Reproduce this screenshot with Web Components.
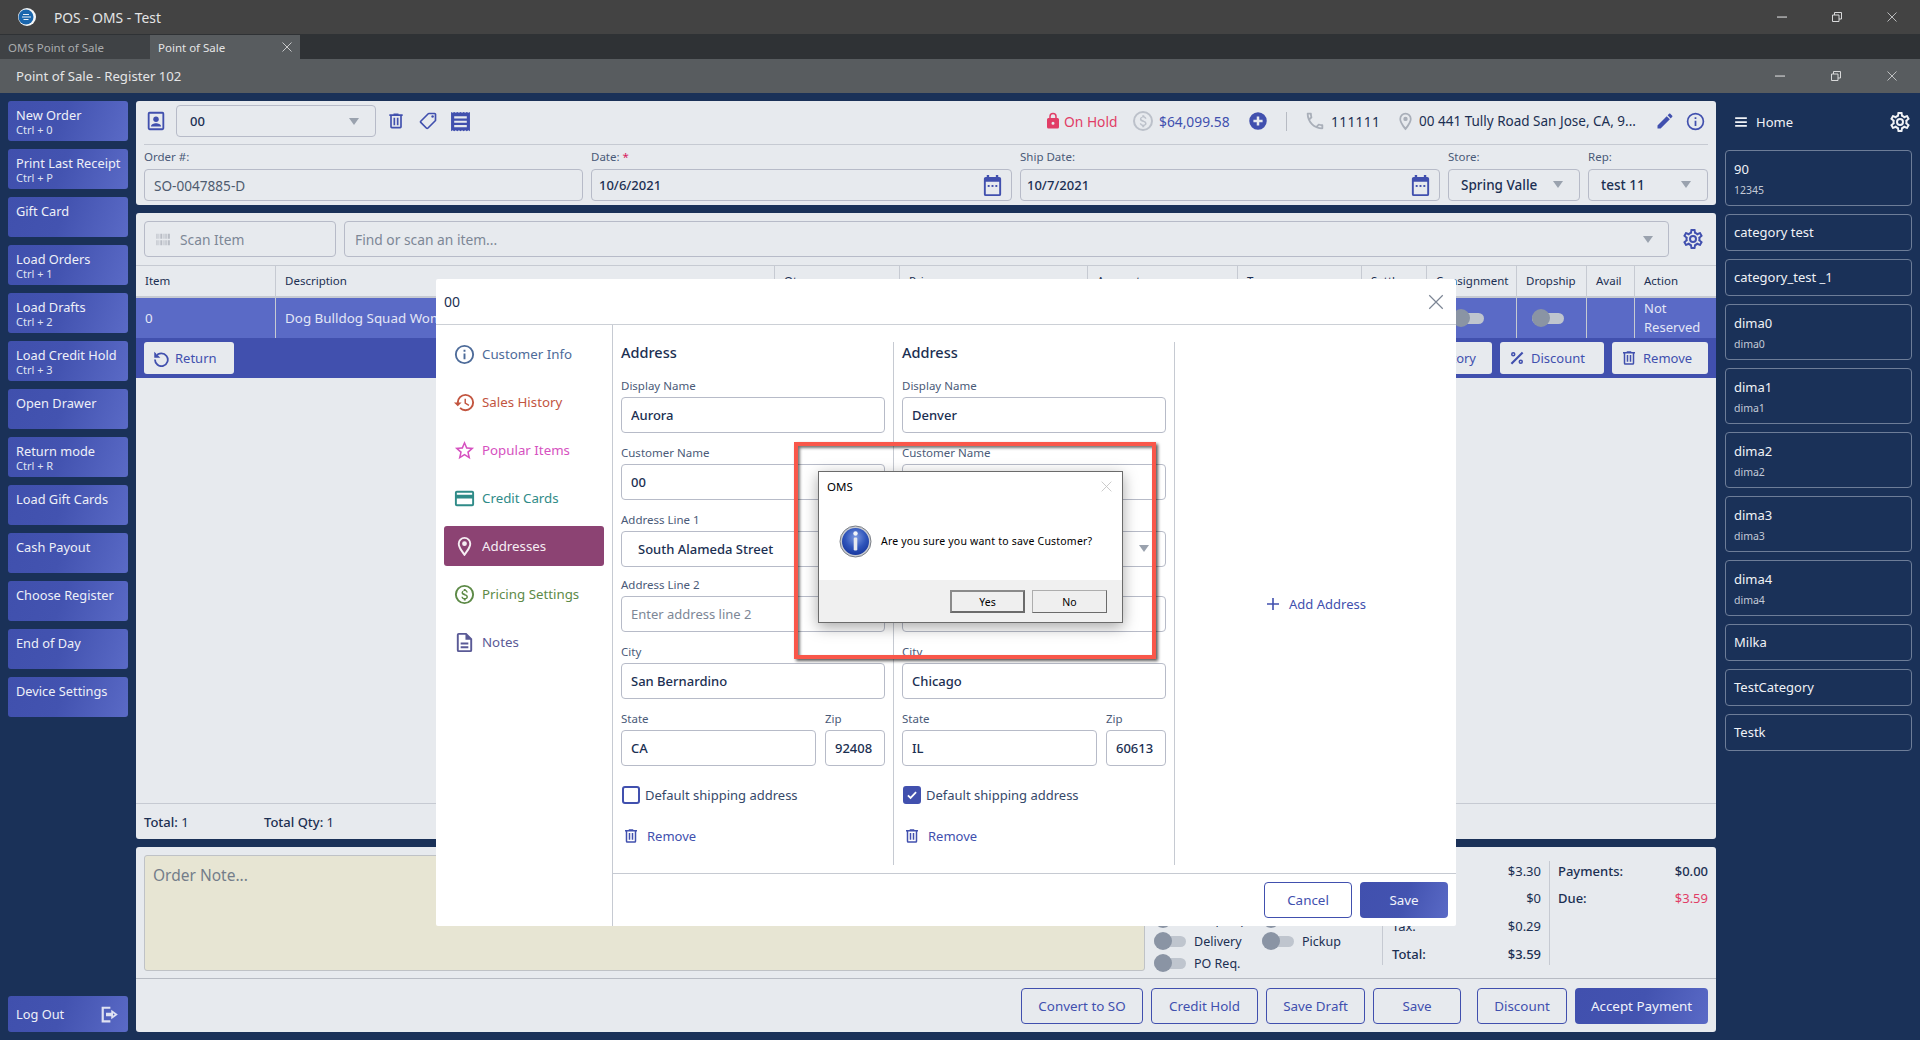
<!DOCTYPE html>
<html lang="en">
<head>
<meta charset="utf-8">
<title>POS - OMS - Test</title>
<style>
  html, body { margin: 0; height: 100%; overflow: hidden; background: #1a3158; }
</style>
</head>
<body>
<pos-app></pos-app>
<script>
// icon paths, 24x24 box
const ICONS = {
  trash: '<path d="M9 3v1H4v2h1v13a2 2 0 0 0 2 2h10a2 2 0 0 0 2-2V6h1V4h-5V3H9m-2 3h10v13H7V6m2 2v9h2V8H9m4 0v9h2V8h-2Z"/>',
  contact: '<path fill-rule="evenodd" d="M5 2h14a2 2 0 0 1 2 2v16a2 2 0 0 1-2 2H5a2 2 0 0 1-2-2V4a2 2 0 0 1 2-2m0 2v16h14V4H5Z"/><circle cx="12" cy="10" r="3"/><path d="M6.500 18c0-2.400 3.200-3.600 5.500-3.600s5.500 1.200 5.500 3.600Z"/>',
  tag: '<g transform="translate(24 0) scale(-1 1)"><path d="M21.410 11.580l-9-9C12.050 2.220 11.550 2 11 2H4c-1.100 0-2 .9-2 2v7c0 .55.22 1.050.59 1.420l9 9c.36.36.86.58 1.410.58.55 0 1.050-.22 1.410-.59l7-7c.37-.36.59-.86.59-1.410 0-.55-.23-1.060-.59-1.420M13 20l-9-9V4h7v-.01l9 9-7 7.010Z"/><circle cx="6.500" cy="6.500" r="1.500"/></g>',
  receipt: '<path transform="translate(12 0) scale(1.200 1) translate(-12 0)" fill-rule="evenodd" d="M3 1l1.500 1L6 1l1.500 1L9 1l1.500 1L12 1l1.500 1L15 1l1.500 1L18 1l1.500 1L21 1v22l-1.500-1-1.500 1-1.500-1-1.500 1-1.500-1-1.500 1-1.500-1L9 23l-1.500-1L6 23l-1.500-1L3 23V1m3 5v2.500h12V6H6m0 5v2.500h12V11H6m0 5v2.500h12V16H6Z"/>',
  calendar: '<path fill-rule="evenodd" d="M6 1h2.500v2h7V1H18v2h1a2 2 0 0 1 2 2v16a2 2 0 0 1-2 2H5a2 2 0 0 1-2-2V5a2 2 0 0 1 2-2h1V1M5 8v13h14V8H5Z"/><rect x="7" y="11.500" width="2" height="2"/><rect x="11" y="11.500" width="2" height="2"/><rect x="15" y="11.500" width="2" height="2"/>',
  lock: '<path d="M12 17a2 2 0 0 0 2-2 2 2 0 0 0-2-2 2 2 0 0 0-2 2 2 2 0 0 0 2 2m6-9a2 2 0 0 1 2 2v10a2 2 0 0 1-2 2H6a2 2 0 0 1-2-2V10a2 2 0 0 1 2-2h1V6a5 5 0 0 1 5-5 5 5 0 0 1 5 5v2h1m-6-5a3 3 0 0 0-3 3v2h6V6a3 3 0 0 0-3-3Z"/>',
  dollar: '<path fill-rule="evenodd" d="M12 2a10 10 0 1 1 0 20 10 10 0 0 1 0-20m0 2a8 8 0 1 0 0 16 8 8 0 0 0 0-16Z"/><path d="M12.700 11.200c-1.800-.45-2.300-.85-2.300-1.550 0-.75.7-1.250 1.800-1.250 1.200 0 1.650.58 1.700 1.400h1.500c-.05-1.150-.75-2.200-2.150-2.550V6.300h-2v1.450c-1.300.28-2.350 1.120-2.350 2.420 0 1.540 1.280 2.300 3.150 2.750 1.670.4 2 .99 2 1.610 0 .46-.33 1.200-1.800 1.200-1.380 0-1.920-.62-2-1.400H8.800c.08 1.460 1.170 2.280 2.450 2.550v1.450h2v-1.430c1.300-.25 2.350-1 2.350-2.370 0-1.900-1.630-2.540-2.900-2.830Z"/>',
  plus: '<path fill-rule="evenodd" d="M12 1.500a10.500 10.500 0 1 1 0 21 10.500 10.500 0 0 1 0-21M10.500 6.500v4h-4v3h4v4h3v-4h4v-3h-4v-4h-3Z"/>',
  phone: '<path d="M20 15.500c-1.200 0-2.500-.2-3.600-.6h-.3c-.3 0-.5.1-.7.3l-2.200 2.200c-2.800-1.500-5.200-3.800-6.600-6.600l2.200-2.200c.3-.3.4-.7.2-1-.3-1.100-.5-2.400-.5-3.600 0-.5-.5-1-1-1H4c-.5 0-1 .5-1 1 0 9.400 7.600 17 17 17 .5 0 1-.5 1-1v-3.500c0-.5-.5-1-1-1M5 5h1.500c.1.9.3 1.800.5 2.600L5.800 8.800C5.400 7.600 5.100 6.300 5 5m14 14c-1.300-.1-2.600-.4-3.800-.8l1.200-1.200c.8.2 1.700.4 2.600.4V19Z"/>',
  pin: '<path d="M12 6.500A2.500 2.500 0 0 1 14.500 9a2.500 2.500 0 0 1-2.500 2.500A2.500 2.500 0 0 1 9.500 9 2.500 2.500 0 0 1 12 6.500M12 2a7 7 0 0 1 7 7c0 5.250-7 13-7 13S5 14.250 5 9a7 7 0 0 1 7-7m0 2a5 5 0 0 0-5 5c0 1 0 3 5 9.710C17 12 17 10 17 9a5 5 0 0 0-5-5Z"/>',
  pencil: '<path d="M20.710 7.040c.39-.39.39-1.040 0-1.410l-2.340-2.340c-.37-.39-1.020-.39-1.410 0l-1.840 1.830 3.750 3.750M3 17.250V21h3.750L17.810 9.930l-3.750-3.750L3 17.250Z"/>',
  info: '<path d="M11 9h2V7h-2m1 13c-4.410 0-8-3.590-8-8s3.590-8 8-8 8 3.590 8 8-3.590 8-8 8m0-18A10 10 0 0 0 2 12a10 10 0 0 0 10 10 10 10 0 0 0 10-10A10 10 0 0 0 12 2m-1 15h2v-6h-2v6Z"/>',
  gear: '<path d="M12 8a4 4 0 0 1 4 4 4 4 0 0 1-4 4 4 4 0 0 1-4-4 4 4 0 0 1 4-4m0 2a2 2 0 0 0-2 2 2 2 0 0 0 2 2 2 2 0 0 0 2-2 2 2 0 0 0-2-2m-2 12c-.25 0-.46-.18-.5-.42l-.37-2.650c-.63-.25-1.170-.59-1.690-.99l-2.490 1.010c-.22.08-.49 0-.61-.22l-2-3.460a.493.493 0 0 1 .12-.64l2.110-1.660L4.500 12l.07-1-2.110-1.630a.493.493 0 0 1-.12-.64l2-3.460c.12-.22.39-.31.61-.22l2.490 1c.52-.39 1.060-.73 1.690-.98l.37-2.650c.04-.24.25-.42.5-.42h4c.25 0 .46.18.5.42l.37 2.650c.63.25 1.170.59 1.690.98l2.490-1c.22-.09.49 0 .61.22l2 3.460c.13.22.07.49-.12.64L19.430 11l.07 1-.07 1 2.110 1.630c.19.15.25.42.12.64l-2 3.460c-.12.22-.39.31-.61.22l-2.490-1c-.52.39-1.060.73-1.690.98l-.37 2.650c-.04.24-.25.42-.5.42h-4m1.250-18-.37 2.610c-1.200.25-2.260.89-3.030 1.780L5.440 7.350l-.75 1.300L6.800 10.200a5.550 5.550 0 0 0 0 3.600l-2.120 1.560.75 1.300 2.430-1.040c.77.88 1.820 1.520 3.010 1.760l.37 2.620h1.520l.37-2.610c1.190-.25 2.240-.89 3.010-1.770l2.430 1.040.75-1.300-2.120-1.550c.4-1.170.4-2.440 0-3.610l2.110-1.550-.75-1.300-2.410 1.040a5.420 5.420 0 0 0-3.030-1.770L12.750 4h-1.500Z"/>',
  history: '<path d="M13.500 8H12v5l4.280 2.540.72-1.210-3.500-2.080V8M13 3a9 9 0 0 0-9 9H1l3.960 4.030L9 12H6a7 7 0 0 1 7-7 7 7 0 0 1 7 7 7 7 0 0 1-7 7c-1.930 0-3.680-.79-4.940-2.060l-1.420 1.420A8.896 8.896 0 0 0 13 21a9 9 0 0 0 9-9 9 9 0 0 0-9-9Z"/>',
  star: '<path d="M12 15.390l-3.760 2.270.99-4.280-3.320-2.880 4.380-.37L12 6.090l1.710 4.040 4.380.37-3.320 2.880.99 4.280M22 9.240l-7.190-.61L12 2 9.190 8.630 2 9.240l5.450 4.730L5.820 21 12 17.270 18.180 21l-1.640-7.030L22 9.240Z"/>',
  card: '<path d="M20 4H4c-1.110 0-2 .89-2 2v12a2 2 0 0 0 2 2h16a2 2 0 0 0 2-2V6c0-1.110-.89-2-2-2m0 14H4v-6h16v6m0-10H4V6h16v2Z"/>',
  doc: '<path d="M6 2a2 2 0 0 0-2 2v16a2 2 0 0 0 2 2h12a2 2 0 0 0 2-2V8l-6-6H6m0 2h7v5h5v11H6V4m2 8v2h8v-2H8m0 4v2h8v-2H8Z"/>',
  percent: '<path d="M18.500 3.500l2 2-15 15-2-2 15-15M7 4a3 3 0 0 1 3 3 3 3 0 0 1-3 3 3 3 0 0 1-3-3 3 3 0 0 1 3-3m10 10a3 3 0 0 1 3 3 3 3 0 0 1-3 3 3 3 0 0 1-3-3 3 3 0 0 1 3-3M7 6a1 1 0 0 0-1 1 1 1 0 0 0 1 1 1 1 0 0 0 1-1 1 1 0 0 0-1-1m10 10a1 1 0 0 0-1 1 1 1 0 0 0 1 1 1 1 0 0 0 1-1 1 1 0 0 0-1-1Z"/>',
  restore: '<path fill="none" stroke="currentColor" stroke-width="2.400" d="M5.500 9.500A8.500 8.500 0 1 1 4 14"/><path d="M3 3.500v8h8L8.500 9 5.800 9 5.500 6Z"/>',
  logout: '<path d="M3 3h10v2.500H5.500v13H13V21H3V3m11 3.500 7.500 5.500-7.500 5.500V14H8v-4h6V6.500m2 4v1.500h-6v0h6v1.500L18 12Z"/>',
  menu: '<path d="M2 4h20v3H2V4m0 6.500h20v3H2v-3M2 17h20v3H2v-3Z"/>',
  close: '<path fill="none" stroke="currentColor" stroke-width="1.600" d="M3 3l18 18M21 3 3 21"/>',
  minimize: '<path d="M2 11h20v2.200H2Z"/>',
  maximize: '<path fill="none" stroke="currentColor" stroke-width="2" d="M3 8h13v13H3V8M7 8V3h14v13h-5"/>',
  barcode: '<path d="M2 4h1.500v7H2V4m3 0h1v7H5V4m2.500 0H10v7H7.500V4M11 4h1v7h-1V4m2.500 0H15v7h-1.500V4m2.500 0h1v7h-1V4m2 0h3v7h-3V4M2 13h1.500v7H2v-7m3 0h1v7H5v-7m2.500 0H10v7H7.500v-7M11 13h1v7h-1v-7m2.500 0H15v7h-1.500v-7m2.500 0h1v7h-1v-7m2 0h3v7h-3v-7Z"/>',
  check: '<path fill="none" stroke="currentColor" stroke-width="3" d="M5 12.500l4.500 4.500L19 7"/>',
  add: '<path d="M10.800 3h2.400v7.800H21v2.400h-7.800V21h-2.400v-7.800H3v-2.400h7.800V3Z"/>'
};

class UiIcon extends HTMLElement {
  connectedCallback() {
    const size = this.getAttribute('size') || 20;
    this.attachShadow({ mode: 'open' }).innerHTML = `
      <style>:host { display: inline-flex; flex: none; width: ${size}px; height: ${size}px; } svg { width: 100%; height: 100%; fill: currentColor; display: block; }</style>
      <svg viewBox="0 0 24 24" aria-hidden="true">${ICONS[this.getAttribute('name')] || ''}</svg>`;
  }
}
customElements.define('ui-icon', UiIcon);

// the dark window strips on top
class WinBar extends HTMLElement {
  connectedCallback() {
    const inner = this.hasAttribute('inner');
    this.attachShadow({ mode: 'open' }).innerHTML = `
      <style>
        :host { display: flex; align-items: center; height: 34px; background: ${inner ? '#585c5f' : '#434343'}; color: #e4e5e6; font-size: ${inner ? 13.2 : 13.8}px; padding-left: ${inner ? 16 : 18}px; }
        .controls { margin-left: auto; display: flex; align-items: center; color: #d8d9da; }
        .controls ui-icon { margin-right: ${inner ? 44 : 43}px; }
        .controls ui-icon:last-child { margin-right: 22px; }
        ::slotted(svg) { margin-right: 18px; }
      </style>
      <slot name="logo"></slot><span>${this.getAttribute('title-text')}</span>
      <div class="controls">
        <ui-icon name="minimize" size="12"></ui-icon>
        <ui-icon name="maximize" size="12"></ui-icon>
        <ui-icon name="close" size="12"></ui-icon>
      </div>`;
  }
}
customElements.define('win-bar', WinBar);

const tabTpl = document.createElement('template');
tabTpl.innerHTML = `
  <style>
    :host { display: flex; height: 25px; background: #2f3235; font-size: 11.500px; }
    .tab { box-sizing: border-box; width: 150px; height: 24px; margin-top: 1px; display: flex; align-items: center; padding-left: 8px; background: #3f4245; color: #a9abad; }
    .on { background: #585c5f; color: #e4e5e6; justify-content: space-between; padding-right: 7px; }
  </style>
  <div class="tab">OMS Point of Sale</div>
  <div class="tab on">Point of Sale<ui-icon name="close" size="12"></ui-icon></div>`;
class TabStrip extends HTMLElement {
  constructor() { super(); this.attachShadow({ mode: 'open' }).appendChild(tabTpl.content.cloneNode(true)); }
}
customElements.define('tab-strip', TabStrip);

const sideTpl = document.createElement('template');
sideTpl.innerHTML = `
  <style>
    :host { box-sizing: border-box; display: block; width: 120px; height: 40px; padding: 6px 8px 0; border-radius: 3px; background: linear-gradient(110deg, #4050ad 0%, #4353b0 45%, #5a6ac6 100%); color: #eef0f8; font-size: 12.800px; line-height: 16px; white-space: nowrap; }
    div { font-size: 11px; line-height: 13px; color: #dfe2f2; }
  </style>
  <slot></slot><div><slot name="key"></slot></div>`;
class SideBtn extends HTMLElement {
  constructor() { super(); this.attachShadow({ mode: 'open' }).appendChild(sideTpl.content.cloneNode(true)); }
}
customElements.define('side-btn', SideBtn);

const fieldTpl = document.createElement('template');
fieldTpl.innerHTML = `
  <style>
    :host { display: block; min-width: 0; }
    label { display: block; height: var(--label-h, 19px); line-height: var(--label-h, 19px); margin-bottom: var(--label-gap, 2px); font-size: 11.500px; color: #4a5a78; white-space: nowrap; }
    label b { color: #d81b60; font-weight: 400; }
    .box { box-sizing: border-box; height: var(--input-h, 36px); display: flex; align-items: center; padding: 0 8px 0 var(--pad-left, 9px); background: var(--input-bg, #fff); border: 1px solid #b7bbc8; border-radius: 4px; font-size: var(--val-size, 13px); font-weight: 500; color: #1b2f52; white-space: nowrap; overflow: hidden; }
    .ph { color: #7d8796; font-weight: 400; }
    .grey { color: #4f5c70; font-weight: 400; }
    span { flex: 1; min-width: 0; overflow: hidden; }
    .caret { flex: none; width: 0; height: 0; margin: 0 8px 2px 6px; border: 5px solid transparent; border-top: 7px solid #9aa2ae; border-bottom: 0; }
    ui-icon { color: #4150ae; margin-right: -1px; }
  </style>
  <label></label>
  <div class="box"><span></span></div>`;
class FormField extends HTMLElement {
  connectedCallback() {
    const root = this.attachShadow({ mode: 'open' });
    root.appendChild(fieldTpl.content.cloneNode(true));
    const label = root.querySelector('label');
    label.textContent = this.getAttribute('label');
    if (this.hasAttribute('required')) label.insertAdjacentHTML('beforeend', ' <b>*</b>');
    const text = root.querySelector('span');
    if (this.hasAttribute('placeholder')) {
      text.textContent = this.getAttribute('placeholder');
      text.className = 'ph';
    } else {
      text.textContent = this.getAttribute('value') || '';
    }
    if (this.hasAttribute('muted')) text.className = 'grey';
    const box = root.querySelector('.box');
    if (this.hasAttribute('caret')) box.insertAdjacentHTML('beforeend', '<i class="caret"></i>');
    if (this.hasAttribute('date')) box.insertAdjacentHTML('beforeend', '<ui-icon name="calendar" size="23"></ui-icon>');
  }
}
customElements.define('form-field', FormField);

const btnTpl = document.createElement('template');
btnTpl.innerHTML = `
  <style>
    :host { box-sizing: border-box; display: inline-flex; align-items: center; justify-content: center; height: 36px; border: 1px solid #4150ae; border-radius: 4px; color: #4150ae; font-size: 13.400px; white-space: nowrap; }
    :host([primary]) { border: 0; color: #f1f3fb; background: linear-gradient(110deg, #4150ae 0%, #4353b0 50%, #5a6ac6 100%); }
    :host([plain]) { height: 32px; border: 0; background: #e7eaee; gap: 5px; border-radius: 3px; justify-content: flex-start; padding-left: 8px; font-size: 13px; }
  </style>
  <slot></slot>`;
class PosBtn extends HTMLElement {
  constructor() { super(); this.attachShadow({ mode: 'open' }).appendChild(btnTpl.content.cloneNode(true)); }
}
customElements.define('pos-btn', PosBtn);

const toggleTpl = document.createElement('template');
toggleTpl.innerHTML = `
  <style>
    :host { display: flex; align-items: center; gap: 8px; height: 22px; font-size: 12.500px; color: #1b2f52; white-space: nowrap; }
    .sw { position: relative; flex: none; width: 32px; height: 11px; border-radius: 6px; background: #bfc5ce; }
    .sw::before { content: ""; position: absolute; left: 0; top: -4px; width: 18px; height: 18px; border-radius: 50%; background: #8a94a4; }
  </style>
  <div class="sw"></div><slot></slot>`;
class ToggleSw extends HTMLElement {
  constructor() { super(); this.attachShadow({ mode: 'open' }).appendChild(toggleTpl.content.cloneNode(true)); }
}
customElements.define('toggle-sw', ToggleSw);

const catTpl = document.createElement('template');
catTpl.innerHTML = `
  <style>
    :host { box-sizing: border-box; display: block; width: 187px; min-height: 37px; padding: 0 8px; border: 1px solid #6d7d98; border-radius: 4px; color: #f0f2f6; font-size: 13px; line-height: 35px; }
    :host([sub]) { height: 56px; padding-top: 9px; line-height: 19px; }
    div { margin-top: 3px; font-size: 10.500px; line-height: 16px; color: #c3cad6; }
  </style>
  <slot></slot>`;
class CatCard extends HTMLElement {
  connectedCallback() {
    const root = this.attachShadow({ mode: 'open' });
    root.appendChild(catTpl.content.cloneNode(true));
    if (this.hasAttribute('sub')) root.appendChild(Object.assign(document.createElement('div'), { textContent: this.getAttribute('sub') }));
  }
}
customElements.define('cat-card', CatCard);

const addrTpl = document.createElement('template');
addrTpl.innerHTML = `
  <style>
    :host { box-sizing: border-box; display: block; width: 281px; padding: 0 8px; border-right: 1px solid #c6cad2; color: #1b2f52; }
    h3 { margin: 0 0 13px; height: 21px; line-height: 21px; font-size: 14.500px; font-weight: 500; }
    form-field { margin-top: 10px; }
    h3 + form-field { margin-top: 0; }
    .tight { margin-top: 8px; }
    .split { display: grid; grid-template-columns: 195px 60px; column-gap: 9px; }
    .check { display: flex; align-items: center; gap: 5px; margin: 20px 0 0 1px; height: 18px; font-size: 13px; color: #36496a; }
    .check i { box-sizing: border-box; width: 18px; height: 18px; border: 2px solid #4150ae; border-radius: 3px; color: #fff; }
    .check i.on { background: #4150ae; }
    .remove { display: flex; align-items: center; gap: 7px; margin: 22px 0 0 1px; height: 20px; font-size: 13px; color: #4150ae; }
  </style>
  <h3>Address</h3>
  <form-field class="n" label="Display Name"></form-field>
  <form-field class="c" label="Customer Name"></form-field>
  <form-field class="a1" label="Address Line 1" caret></form-field>
  <form-field class="a2 tight" label="Address Line 2"></form-field>
  <form-field class="ci" label="City"></form-field>
  <div class="split">
    <form-field class="st" label="State"></form-field>
    <form-field class="zi" label="Zip"></form-field>
  </div>
  <div class="check"><i></i>Default shipping address</div>
  <div class="remove"><ui-icon name="trash" size="18"></ui-icon>Remove</div>`;
class AddressCol extends HTMLElement {
  connectedCallback() {
    // set the field values on the clone, before the fields get connected
    const frag = addrTpl.content.cloneNode(true);
    const map = { n: 'name', c: 'customer', a1: 'line1', ci: 'city', st: 'state', zi: 'zip' };
    for (const k in map) {
      if (this.hasAttribute(map[k])) frag.querySelector('.' + k).setAttribute('value', this.getAttribute(map[k]));
    }
    if (this.hasAttribute('line1')) frag.querySelector('.a1').setAttribute('style', '--pad-left:16px');
    if (this.hasAttribute('line2-empty')) frag.querySelector('.a2').setAttribute('placeholder', 'Enter address line 2');
    if (this.hasAttribute('default')) {
      const box = frag.querySelector('.check i');
      box.className = 'on';
      box.innerHTML = '<ui-icon name="check" size="14"></ui-icon>';
    }
    this.attachShadow({ mode: 'open' }).appendChild(frag);
  }
}
customElements.define('address-col', AddressCol);

const modalTpl = document.createElement('template');
modalTpl.innerHTML = `
  <style>
    :host { position: absolute; left: 436px; top: 279px; width: 1020px; height: 647px; display: flex; flex-direction: column; background: #fff; border-radius: 2px; color: #1b2f52; }
    header { box-sizing: border-box; flex: none; height: 46px; display: flex; align-items: center; justify-content: space-between; padding: 0 11px 0 8px; border-bottom: 1px solid #ccd0d6; font-size: 14px; }
    header ui-icon { color: #7b8594; }
    .body { flex: 1; display: flex; min-height: 0; }
    nav { box-sizing: border-box; flex: none; width: 177px; padding: 9px 8px 0; border-right: 1px solid #c6cad2; display: flex; flex-direction: column; gap: 8px; }
    nav a { height: 40px; display: flex; align-items: center; gap: 6px; padding-left: 9px; border-radius: 3px; font-size: 13.300px; white-space: nowrap; }
    nav a.on { background: #8c4373; color: #f6eef3; }
    .main { flex: 1; display: flex; flex-direction: column; min-width: 0; }
    .cols { flex: 1; display: flex; padding-top: 17px; }
    .add { flex: 1; display: flex; align-items: center; justify-content: center; gap: 8px; margin-bottom: 8px; color: #4150ae; font-size: 13px; }
    .cols-in { height: 523px; display: flex; }
    footer { box-sizing: border-box; flex: none; height: 53px; display: flex; justify-content: flex-end; gap: 8px; padding: 8px; border-top: 1px solid #c6cad2; }
    footer pos-btn { width: 88px; }
  </style>
  <header><span>00</span><ui-icon name="close" size="18"></ui-icon></header>
  <div class="body">
    <nav>
      <a style="color:#4d6b99"><ui-icon name="info" size="23"></ui-icon>Customer Info</a>
      <a style="color:#c2553f"><ui-icon name="history" size="23"></ui-icon>Sales History</a>
      <a style="color:#d651c0"><ui-icon name="star" size="23"></ui-icon>Popular Items</a>
      <a style="color:#2f8b88"><ui-icon name="card" size="23"></ui-icon>Credit Cards</a>
      <a class="on"><ui-icon name="pin" size="23"></ui-icon>Addresses</a>
      <a style="color:#5d8a47"><ui-icon name="dollar" size="23"></ui-icon>Pricing Settings</a>
      <a style="color:#5a5a96"><ui-icon name="doc" size="23"></ui-icon>Notes</a>
    </nav>
    <div class="main">
      <div class="cols">
        <div class="cols-in">
          <address-col name="Aurora" customer="00" line1="South Alameda Street" line2-empty city="San Bernardino" state="CA" zip="92408"></address-col>
          <address-col name="Denver" city="Chicago" state="IL" zip="60613" default></address-col>
        </div>
        <div class="add"><ui-icon name="add" size="16"></ui-icon>Add Address</div>
      </div>
      <footer><pos-btn>Cancel</pos-btn><pos-btn primary>Save</pos-btn></footer>
    </div>
  </div>`;
class CustomerModal extends HTMLElement {
  constructor() { super(); this.attachShadow({ mode: 'open' }).appendChild(modalTpl.content.cloneNode(true)); }
}
customElements.define('customer-modal', CustomerModal);

// red annotation box with the native message box inside
const confirmTpl = document.createElement('template');
confirmTpl.innerHTML = `
  <style>
    :host { position: absolute; left: 794px; top: 442px; width: 362px; height: 217px; box-sizing: border-box; border: 4px solid #f9574a; box-shadow: 2px 2px 3px rgba(0,0,0,.65), inset 2px 2px 3px rgba(0,0,0,.55); }
    .box { position: absolute; left: 20px; top: 25px; width: 305px; height: 152px; box-sizing: border-box; display: flex; flex-direction: column; background: #fff; border: 1px solid #6b6b6b; box-shadow: 0 4px 14px rgba(0,0,0,.35); color: #000; font-size: 10.500px; }
    .title { flex: none; height: 28px; display: flex; align-items: center; justify-content: space-between; padding: 0 9px 0 8px; font-size: 11.500px; }
    .title ui-icon { color: #c4c4c4; }
    .msg { flex: 1; display: flex; align-items: center; gap: 9px; padding: 2px 0 0 20px; letter-spacing: .2px; }
    .msg svg { flex: none; width: 33px; height: 33px; }
    .foot { flex: none; height: 42px; display: flex; justify-content: flex-end; gap: 7px; padding: 10px 15px 0 0; box-sizing: border-box; background: #f0f0f0; }
    .foot b { box-sizing: border-box; width: 75px; height: 23px; display: flex; align-items: center; justify-content: center; font-weight: 400; background: #efefef; border: 1px solid #adadad; border-right-color: #6b6b6b; border-bottom-color: #6b6b6b; }
    .foot b.def { border: 2px solid #6b6b6b; border-top-color: #8a8a8a; border-left-color: #8a8a8a; }
  </style>
  <div class="box">
    <div class="title"><span>OMS</span><ui-icon name="close" size="13"></ui-icon></div>
    <div class="msg">
      <svg viewBox="0 0 33 33">
        <defs><radialGradient id="g" cx=".5" cy=".35" r=".7"><stop offset="0" stop-color="#7d9ae0"/><stop offset=".55" stop-color="#2f55bb"/><stop offset="1" stop-color="#14339a"/></radialGradient></defs>
        <circle cx="16.500" cy="16.500" r="15.500" fill="#c9ccd2" stroke="#7b7f86"/>
        <circle cx="16.500" cy="16.500" r="13.500" fill="url(#g)"/>
        <circle cx="16.500" cy="8.500" r="2.200" fill="#f3f5f8"/>
        <rect x="14.700" y="12.500" width="3.600" height="13" rx="1.200" fill="#e6e9ef"/>
      </svg>
      <span>Are you sure you want to save Customer?</span>
    </div>
    <div class="foot"><b class="def">Yes</b><b>No</b></div>
  </div>`;
class ConfirmBox extends HTMLElement {
  constructor() { super(); this.attachShadow({ mode: 'open' }).appendChild(confirmTpl.content.cloneNode(true)); }
}
customElements.define('confirm-box', ConfirmBox);

const appTpl = document.createElement('template');
appTpl.innerHTML = `
  <style>
    :host { position: relative; display: flex; flex-direction: column; width: 1920px; height: 1040px; overflow: hidden; background: #1a3158; font-family: "Noto Sans", "Open Sans", sans-serif; color: #1b2f52; }
    .work { flex: 1; min-height: 0; display: flex; padding-top: 8px; box-sizing: border-box; }
    .side { flex: none; width: 136px; box-sizing: border-box; padding: 0 0 8px 8px; display: flex; flex-direction: column; gap: 8px; }
    .logout { margin-top: auto; height: 36px; display: flex; align-items: center; padding: 0 8px; }
    .logout ui-icon { margin-left: auto; color: #dfe2f2; }
    .center { flex: none; width: 1580px; display: flex; flex-direction: column; gap: 8px; padding-bottom: 8px; box-sizing: border-box; }
    .panel { background: #e7eaee; border-radius: 3px; }
    .top { flex: none; height: 104px; --input-bg: #e7eaee; --label-h: 18px; --label-gap: 3px; --input-h: 32px; }
    .tools { height: 44px; box-sizing: border-box; margin: 0 8px; padding-bottom: 3px; display: flex; align-items: center; border-bottom: 1px solid #c6cad2; font-size: 13.800px; white-space: nowrap; }
    .tools ui-icon { color: #4150ae; }
    .cust { box-sizing: border-box; width: 200px; height: 32px; margin: 0 10px 0 9px; display: flex; align-items: center; justify-content: space-between; padding: 0 16px 0 13px; border: 1px solid #b7bbc8; border-radius: 4px; font-weight: 500; font-size: 13px; }
    .caret { width: 0; height: 0; border: 5px solid transparent; border-top: 7px solid #9aa2ae; border-bottom: 0; }
    .fields { display: grid; grid-template-columns: 439px 421px 420px 132px 120px; column-gap: 8px; padding: 3px 8px 0; }
    .mid { flex: 1; min-height: 0; display: flex; flex-direction: column; }
    .scan { flex: none; display: flex; align-items: center; height: 36px; margin: 8px 0; padding: 0 11px 0 8px; gap: 8px; }
    .inp { box-sizing: border-box; height: 36px; display: flex; align-items: center; padding: 0 10px; border: 1px solid #b7bbc8; border-radius: 4px; color: #7d8796; font-size: 13.800px; }
    .thead, .tr { display: grid; grid-template-columns: 140px 499px 125px 188px 150px 124px 65px 90px 70px 48px 81px; }
    .thead { flex: none; height: 33px; box-sizing: border-box; border-top: 1px solid #c6cad2; border-bottom: 2px solid #c6cad2; font-size: 11.500px; }
    .thead div { padding-left: 9px; line-height: 30px; border-right: 1px solid #c6cad2; white-space: nowrap; overflow: hidden; }
    .thead div:last-child, .tr div:last-child { border-right: 0; }
    .tr { flex: none; height: 40px; background: #5a6ac6; color: #e3e6f6; font-size: 13.400px; }
    .tr div { box-sizing: border-box; padding-left: 9px; display: flex; align-items: center; border-right: 1px solid #c6cad2; white-space: nowrap; overflow: hidden; }
    .tr .act { white-space: normal; line-height: 19px; font-size: 13px; }
    .tr toggle-sw { margin-left: 6px; }
    .acts { flex: none; height: 40px; background: #4150ae; display: flex; align-items: center; padding: 0 8px; gap: 8px; }
    .acts .sp { margin-right: auto; }
    .grow { flex: 1; }
    .foot { flex: none; height: 36px; box-sizing: border-box; border-top: 1px solid #c6cad2; display: flex; align-items: center; padding-left: 8px; font-size: 13px; }
    .foot b { font-weight: 500; }
    .foot span { width: 120px; }
    .bot { flex: none; height: 185px; display: flex; flex-direction: column; }
    .sum { flex: none; height: 132px; box-sizing: border-box; display: flex; border-bottom: 1px solid #b7bbc3; padding: 8px 8px 0; }
    .note { box-sizing: border-box; flex: none; width: 1001px; height: 116px; padding: 8px; background: #e7e5d3; border: 1px solid #bfc2c6; border-radius: 3px; font-size: 15.500px; color: #747d8a; }
    .flags { box-sizing: border-box; flex: none; width: 228px; margin-left: 9px; padding-top: 53px; display: grid; grid-template-columns: 108px 1fr; grid-auto-rows: 22px; }
    .tot { box-sizing: border-box; flex: none; height: 104px; margin-top: 6px; padding: 0 8px 0 9px; border-left: 1px solid #c6cad2; font-size: 13px; }
    .tot p { margin: 0; height: 27.600px; display: flex; align-items: center; justify-content: space-between; white-space: nowrap; }
    .tot p:first-child { margin-top: -4px; }
    .tot b { font-weight: 500; }
    .tot em { font-style: normal; color: #e13d66; }
    .t1 { width: 167px; }
    .t2 { width: 159px; padding-left: 8px; padding-right: 0; }
    .btns { flex: 1; display: flex; justify-content: flex-end; gap: 8px; padding: 9px 8px 0; }
    .home { flex: none; width: 204px; box-sizing: border-box; padding: 0 8px 0 9px; display: flex; flex-direction: column; gap: 8px; }
    .home-head { height: 41px; display: flex; align-items: center; color: #f0f2f6; font-size: 13px; gap: 8px; padding-left: 9px; }
    .home-head span { margin-right: auto; }
  </style>
  <win-bar title-text="POS - OMS - Test">
    <svg slot="logo" width="18" height="18" viewBox="0 0 18 18">
      <circle cx="9" cy="9" r="9" fill="#f4f6f8"/>
      <circle cx="8" cy="9" r="7.500" fill="#1a66ad"/>
      <path d="M5 6.500h6M4 9h9M5.500 11.500h5" stroke="#e9eef4" stroke-width="1.100"/>
    </svg>
  </win-bar>
  <tab-strip></tab-strip>
  <win-bar inner title-text="Point of Sale - Register 102"></win-bar>
  <div class="work">
    <div class="side">
      <side-btn>New Order<span slot="key">Ctrl + 0</span></side-btn>
      <side-btn>Print Last Receipt<span slot="key">Ctrl + P</span></side-btn>
      <side-btn>Gift Card</side-btn>
      <side-btn>Load Orders<span slot="key">Ctrl + 1</span></side-btn>
      <side-btn>Load Drafts<span slot="key">Ctrl + 2</span></side-btn>
      <side-btn>Load Credit Hold<span slot="key">Ctrl + 3</span></side-btn>
      <side-btn>Open Drawer</side-btn>
      <side-btn>Return mode<span slot="key">Ctrl + R</span></side-btn>
      <side-btn>Load Gift Cards</side-btn>
      <side-btn>Cash Payout</side-btn>
      <side-btn>Choose Register</side-btn>
      <side-btn>End of Day</side-btn>
      <side-btn>Device Settings</side-btn>
      <side-btn class="logout">Log Out<ui-icon name="logout" size="21"></ui-icon></side-btn>
    </div>
    <div class="center">
      <section class="panel top">
        <div class="tools">
          <ui-icon name="contact" size="22" style="margin-left:1px"></ui-icon>
          <div class="cust">00<i class="caret"></i></div>
          <ui-icon name="trash" size="20"></ui-icon>
          <ui-icon name="tag" size="20" style="margin-left:12px"></ui-icon>
          <ui-icon name="receipt" size="21" style="margin-left:12px"></ui-icon>
          <ui-icon name="lock" size="18" style="color:#e13d66;margin-left:auto"></ui-icon>
          <span style="color:#e13d66;margin:0 13px 0 2px;width:54px">On Hold</span>
          <ui-icon name="dollar" size="24" style="color:#bcc1ca"></ui-icon>
          <span style="color:#4150ae;margin:0 19px 0 4px;width:70px">$64,099.58</span>
          <ui-icon name="plus" size="20"></ui-icon>
          <i style="width:1px;height:19px;background:#b7bbc3;margin:0 17px 0 18px"></i>
          <ui-icon name="phone" size="22" style="color:#a9afb9"></ui-icon>
          <span style="margin:0 18px 0 5px;width:46px;letter-spacing:.3px">111111</span>
          <ui-icon name="pin" size="21" style="color:#a9afb9"></ui-icon>
          <span style="margin:0 18px 0 3px;width:218px;font-size:13.500px">00 441 Tully Road San Jose, CA, 9...</span>
          <ui-icon name="pencil" size="20"></ui-icon>
          <ui-icon name="info" size="21" style="margin:0 2px 0 10px"></ui-icon>
        </div>
        <div class="fields">
          <form-field label="Order #:" value="SO-0047885-D" muted style="--val-size:13.600px"></form-field>
          <form-field label="Date:" required value="10/6/2021" date style="--pad-left:7px"></form-field>
          <form-field label="Ship Date:" value="10/7/2021" date style="--pad-left:6px"></form-field>
          <form-field label="Store:" value="Spring Valle" caret style="--pad-left:12px;--val-size:13.500px"></form-field>
          <form-field label="Rep:" value="test 11" caret style="--pad-left:12px;--val-size:13.500px"></form-field>
        </div>
      </section>
      <section class="panel mid">
        <div class="scan">
          <div class="inp" style="width:192px;gap:8px;flex:none"><ui-icon name="barcode" size="17" style="color:#b9bdc5"></ui-icon>Scan Item</div>
          <div class="inp" style="flex:1;justify-content:space-between">Find or scan an item...<i class="caret" style="margin-right:5px"></i></div>
          <ui-icon name="gear" size="24" style="color:#4150ae;margin-left:4px"></ui-icon>
        </div>
        <div class="thead">
          <div>Item</div><div>Description</div><div>Qty</div><div>Price</div><div>Amount</div><div>Tax</div><div>Settle</div><div>Consignment</div><div>Dropship</div><div>Avail</div><div>Action</div>
        </div>
        <div class="tr">
          <div>0</div><div>Dog Bulldog Squad Women</div><div></div><div></div><div></div><div></div><div></div>
          <div><toggle-sw style="margin-left:16px"></toggle-sw></div><div><toggle-sw></toggle-sw></div><div></div><div class="act">Not Reserved</div>
        </div>
        <div class="acts">
          <pos-btn plain class="sp" style="width:90px"><ui-icon name="restore" size="18"></ui-icon>Return</pos-btn>
          <pos-btn plain style="width:90px;justify-content:flex-end;padding-right:16px">History</pos-btn>
          <pos-btn plain style="width:104px"><ui-icon name="percent" size="18"></ui-icon>Discount</pos-btn>
          <pos-btn plain style="width:96px"><ui-icon name="trash" size="18"></ui-icon>Remove</pos-btn>
        </div>
        <div class="grow"></div>
        <div class="foot"><span><b>Total:</b> 1</span><span><b>Total Qty:</b> 1</span></div>
      </section>
      <section class="panel bot">
        <div class="sum">
          <div class="note">Order Note...</div>
          <div class="flags">
            <toggle-sw>Dropship</toggle-sw><toggle-sw></toggle-sw>
            <toggle-sw>Delivery</toggle-sw><toggle-sw>Pickup</toggle-sw>
            <toggle-sw>PO Req.</toggle-sw>
          </div>
          <div class="tot t1">
            <p><span></span><span>$3.30</span></p>
            <p><span></span><span>$0</span></p>
            <p><span>Tax:</span><span>$0.29</span></p>
            <p><b>Total:</b><b>$3.59</b></p>
          </div>
          <div class="tot t2">
            <p><b>Payments:</b><b>$0.00</b></p>
            <p><b>Due:</b><em>$3.59</em></p>
          </div>
        </div>
        <div class="btns">
          <pos-btn style="width:122px">Convert to SO</pos-btn>
          <pos-btn style="width:107px">Credit Hold</pos-btn>
          <pos-btn style="width:99px">Save Draft</pos-btn>
          <pos-btn style="width:88px;margin-right:8px">Save</pos-btn>
          <pos-btn style="width:90px">Discount</pos-btn>
          <pos-btn primary style="width:133px">Accept Payment</pos-btn>
        </div>
      </section>
    </div>
    <div class="home">
      <div class="home-head"><ui-icon name="menu" size="14"></ui-icon><span>Home</span><ui-icon name="gear" size="24"></ui-icon></div>
      <cat-card sub="12345">90</cat-card>
      <cat-card>category test</cat-card>
      <cat-card>category_test _1</cat-card>
      <cat-card sub="dima0">dima0</cat-card>
      <cat-card sub="dima1">dima1</cat-card>
      <cat-card sub="dima2">dima2</cat-card>
      <cat-card sub="dima3">dima3</cat-card>
      <cat-card sub="dima4">dima4</cat-card>
      <cat-card>Milka</cat-card>
      <cat-card>TestCategory</cat-card>
      <cat-card>Testk</cat-card>
    </div>
  </div>
  <customer-modal></customer-modal>
  <confirm-box></confirm-box>`;
class PosApp extends HTMLElement {
  constructor() { super(); this.attachShadow({ mode: 'open' }).appendChild(appTpl.content.cloneNode(true)); }
}
customElements.define('pos-app', PosApp);
</script>
</body>
</html>
